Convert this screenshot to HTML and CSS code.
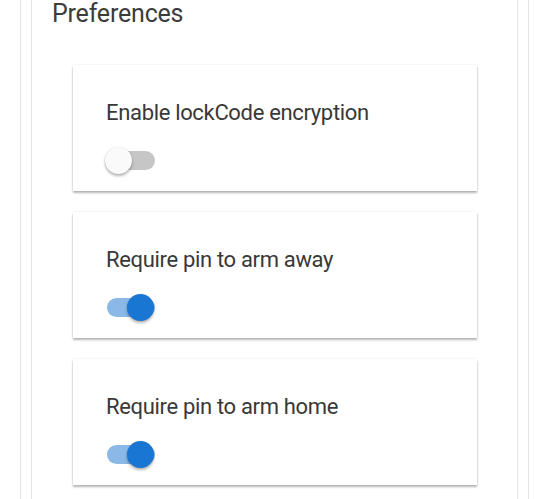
FILE: index.html
```html
<!DOCTYPE html>
<html lang="en">
<head>
    <meta charset="UTF-8">
    <meta name="viewport" content="width=device-width, initial-scale=1.0">
    <title>Preferences</title>
    <link rel="stylesheet" href="styles.css">
</head>
<body>
    <div class="frame">
        <div class="panel">
            <h2 class="panel-title">Preferences</h2>
            <div class="pref-list">
                <div class="pref-card">
                    <div class="pref-label">Enable lockCode encryption</div>
                    <span class="switch"><span class="switch-thumb"></span></span>
                </div>
                <div class="pref-card">
                    <div class="pref-label">Require pin to arm away</div>
                    <span class="switch on"><span class="switch-thumb"></span></span>
                </div>
                <div class="pref-card">
                    <div class="pref-label">Require pin to arm home</div>
                    <span class="switch on"><span class="switch-thumb"></span></span>
                </div>
            </div>
        </div>
    </div>
</body>
</html>
```

FILE: styles.css
```css
* {
    margin: 0;
    padding: 0;
    box-sizing: border-box;
}
html, body {
    width: 100%;
    height: 100%;
    overflow: hidden;
}
body {
    font-family: Roboto, "Liberation Sans", sans-serif;
    background-color: #fff;
    color: #383838;
}
.frame {
    margin: 0 19px 0 20px;
    height: 100%;
    padding: 0 10px;
    border-left: 1px solid #e4e4e4;
    border-right: 1px solid #e4e4e4;
}
.panel {
    height: 100%;
    border-left: 1px solid #e4e4e4;
    border-right: 1px solid #e4e4e4;
}
.panel-title {
    font-weight: 400;
    font-size: 25px;
    line-height: 28px;
    letter-spacing: -0.2px;
    padding-left: 20px;
    color: #3c3c3c;
}
.pref-list {
    display: flex;
    flex-direction: column;
    gap: 21px;
    padding: 37px 40px 0 41px;
}
.pref-card {
    height: 126px;
    padding: 34px 32px 0 33px;
    background-color: #fff;
    box-shadow: 0 2px 2px rgba(0, 0, 0, 0.28), 0 0 2px rgba(0, 0, 0, 0.1);
}
.pref-label {
    font-size: 22px;
    line-height: 28px;
    letter-spacing: -0.33px;
    color: #383838;
}
.switch {
    display: block;
    position: relative;
    width: 48px;
    height: 19px;
    margin-top: 24px;
    margin-left: 1px;
    border-radius: 10px;
    background-color: #c6c6c6;
}
.switch-thumb {
    position: absolute;
    top: -4px;
    left: -2px;
    width: 27px;
    height: 27px;
    border-radius: 50%;
    background-color: #fafafa;
    box-shadow: 0 2px 3px rgba(0, 0, 0, 0.3), 0 0 1px rgba(0, 0, 0, 0.15);
}
.switch.on {
    background-color: #8ab8e7;
}
.switch.on .switch-thumb {
    left: 20px;
    background-color: #1976d2;
}
```
